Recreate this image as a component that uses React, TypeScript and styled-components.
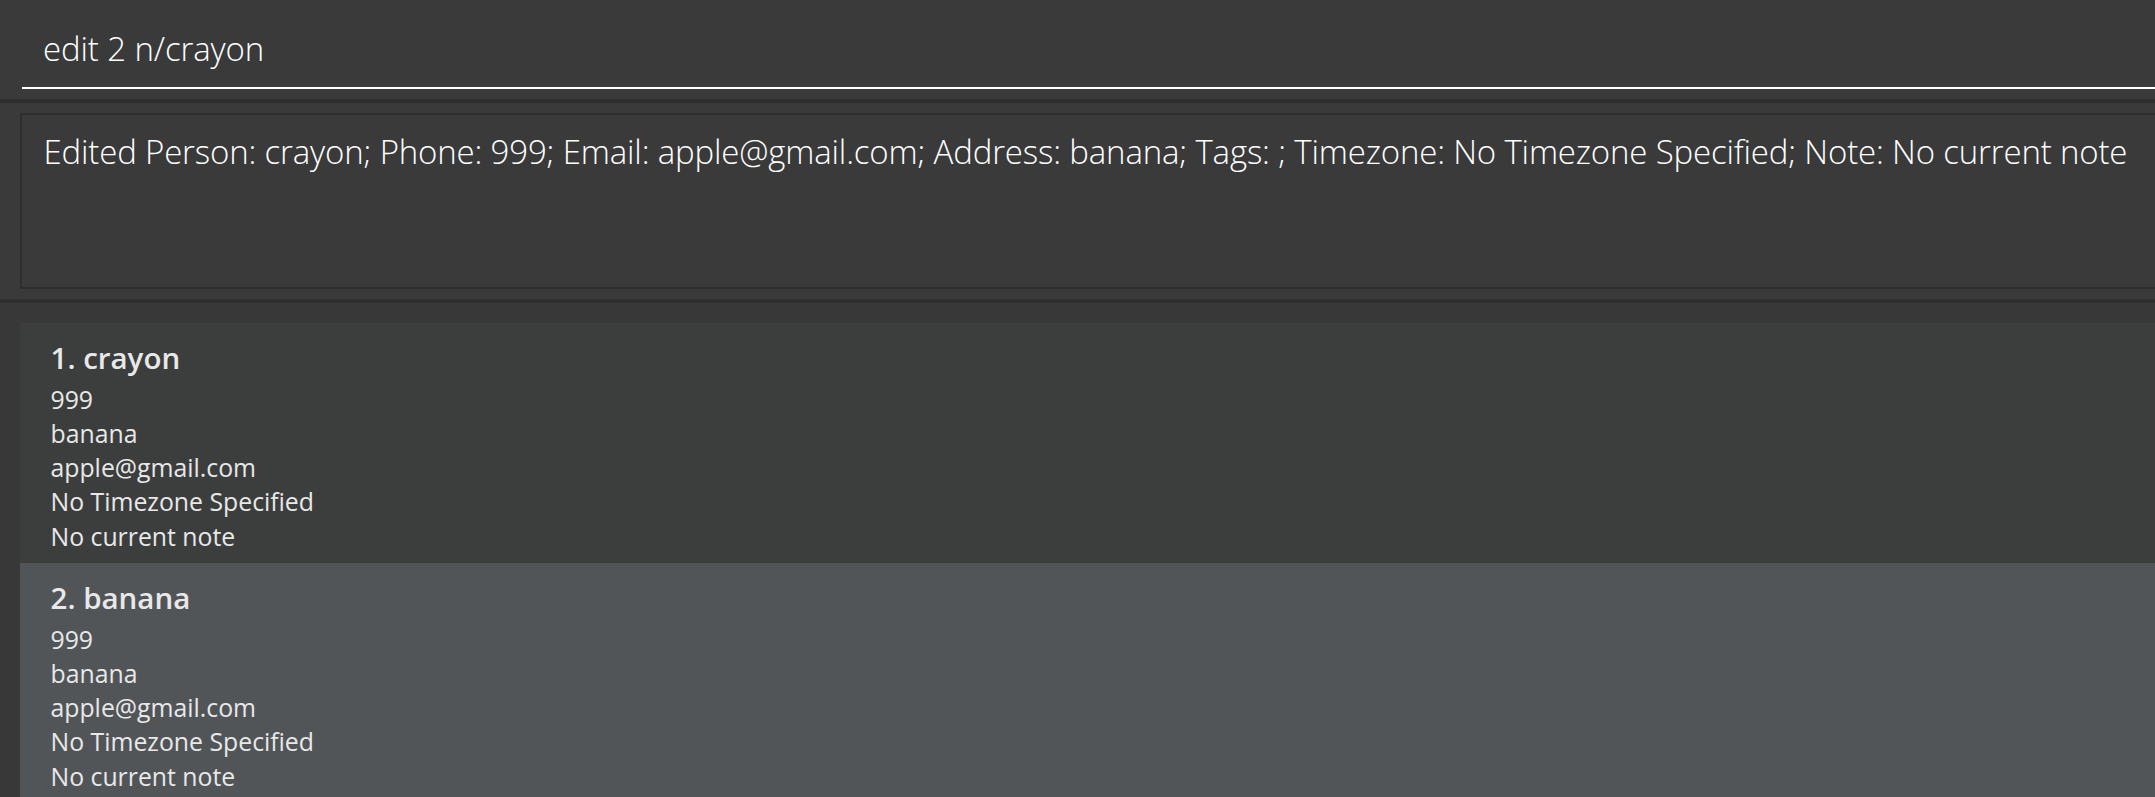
import React from "react";
import styled, { createGlobalStyle } from "styled-components";

const GlobalStyle = createGlobalStyle`
  html, body {
    margin: 0;
    padding: 0;
    background: #3a3a3a;
  }
  body {
    font-family: "Open Sans", "Noto Sans", sans-serif;
    -webkit-font-smoothing: antialiased;
  }
`;

const Window = styled.div`
  width: 2155px;
  height: 797px;
  overflow: hidden;
  background: #3a3a3a;
  display: flex;
  flex-direction: column;
`;

const Divider = styled.div`
  height: 4px;
  flex: none;
  background: #2e2e2e;
`;

const CommandPane = styled.div`
  flex: none;
  height: 99px;
  padding-left: 22px;
  box-sizing: border-box;
`;

const CommandInput = styled.div`
  height: 89px;
  box-sizing: border-box;
  padding: 26px 0 0 21px;
  border-bottom: 2px solid #ffffff;
  font-weight: 300;
  font-size: 33px;
  line-height: 45px;
  letter-spacing: -0.12px;
  color: #ffffff;
  white-space: nowrap;
`;

const ResultPane = styled.div`
  flex: none;
  height: 196px;
  box-sizing: border-box;
  padding: 10px 0 10px 20px;
  display: flex;
`;

const ResultBox = styled.div`
  flex: 1;
  box-sizing: border-box;
  border: 2px solid #2e2e2e;
  border-right: none;
  background: #3a3a3a;
  padding: 14px 0 0 21.5px;
  font-weight: 300;
  font-size: 33px;
  line-height: 45px;
  letter-spacing: -0.17px;
  color: #ffffff;
  white-space: nowrap;
  overflow: hidden;
`;

const ListPane = styled.div`
  flex: 1;
  min-height: 0;
  padding: 20px 0 0 20px;
  background: #383838;
  display: flex;
  flex-direction: column;
`;

const Card = styled.div<{ $odd: boolean }>`
  flex: none;
  height: 240px;
  box-sizing: border-box;
  padding: 11px 0 0 30.5px;
  background: ${p => (p.$odd ? "#515558" : "#3c3e3e")};
  color: #e8e8e8;
  display: flex;
  flex-direction: column;
`;

const CardTitle = styled.div`
  font-weight: 600;
  font-size: 29.5px;
  line-height: 47.5px;
  white-space: nowrap;
`;

const CardLine = styled.div`
  font-weight: 400;
  font-size: 24.8px;
  line-height: 34.3px;
  white-space: nowrap;
`;

type Person = {
  name: string;
  phone: string;
  address: string;
  email: string;
  timezone: string;
  note: string;
};

const people: Person[] = [
  {
    name: "crayon",
    phone: "999",
    address: "banana",
    email: "apple@gmail.com",
    timezone: "No Timezone Specified",
    note: "No current note",
  },
  {
    name: "banana",
    phone: "999",
    address: "banana",
    email: "apple@gmail.com",
    timezone: "No Timezone Specified",
    note: "No current note",
  },
];

export default function App() {
  return (
    <>
      <GlobalStyle />
      <Window>
        <CommandPane>
          <CommandInput>edit 2 n/crayon</CommandInput>
        </CommandPane>
        <Divider />
        <ResultPane>
          <ResultBox>
            Edited Person: crayon; Phone: 999; Email: apple@gmail.com; Address: banana; Tags: ; Timezone: No
            Timezone Specified; Note: No current note
          </ResultBox>
        </ResultPane>
        <Divider />
        <ListPane>
          {people.map((p, i) => (
            <Card key={i} $odd={i % 2 === 1}>
              <CardTitle>
                {i + 1}. {p.name}
              </CardTitle>
              <CardLine>{p.phone}</CardLine>
              <CardLine>{p.address}</CardLine>
              <CardLine>{p.email}</CardLine>
              <CardLine>{p.timezone}</CardLine>
              <CardLine>{p.note}</CardLine>
            </Card>
          ))}
        </ListPane>
      </Window>
    </>
  );
}
